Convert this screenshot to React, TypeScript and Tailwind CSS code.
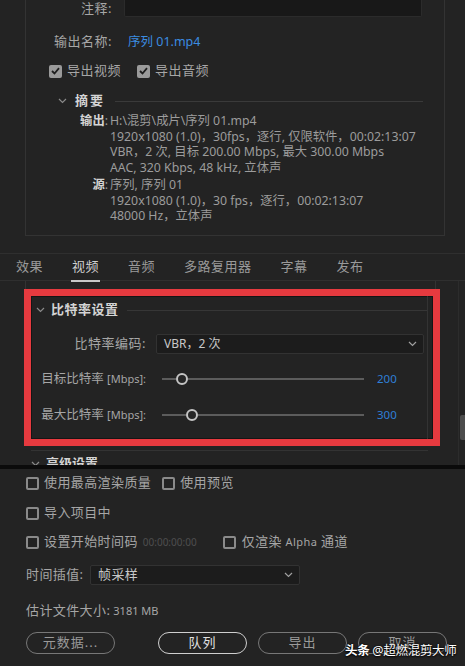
const Chevron = ({ className = '' }: { className?: string }) => (
  <svg width="9" height="6" viewBox="0 0 9 6" className={className}>
    <polyline points="1,1 4.5,4.5 8,1" fill="none" stroke="currentColor" strokeWidth="1.2" />
  </svg>
);

const CheckedBox = () => (
  <span className="flex h-[13px] w-[13px] shrink-0 items-center justify-center rounded-[2px] bg-[#9a9a9a]">
    <svg width="9" height="8" viewBox="0 0 9 8">
      <polyline points="1,4 3.5,6.5 8,1.2" fill="none" stroke="#1e1e1e" strokeWidth="1.8" />
    </svg>
  </span>
);

const EmptyBox = () => <span className="block h-[13px] w-[13px] shrink-0 rounded-[2px] border-2 border-[#8a8a8a]" />;

function Slider({ offset, value }: { offset: number; value: string }) {
  return (
    <div className="flex h-[20px] items-center">
      <span className="w-[115px] text-right text-[12.5px] text-[#a6a6a6]">
        {value === '200' ? '目标比特率' : '最大比特率'} <span className="text-[11px]">[Mbps]:</span>
      </span>
      <div className="ml-[16px] flex w-[202px] items-center">
        <div className="h-[2px] bg-[#5c5c5c]" style={{ width: offset - 6 }} />
        <span className="h-[12px] w-[12px] shrink-0 rounded-full border-[2.5px] border-[#c4c4c4] bg-[#262626]" />
        <div className="h-[2px] flex-1 bg-[#5c5c5c]" />
      </div>
      <span className="ml-[13px] text-[11.5px] text-[#2f7fd6]">{value}</span>
    </div>
  );
}

export default function App() {
  return (
    <div className="relative flex h-[666px] w-[465px] flex-col overflow-hidden bg-[#232323] font-['Noto_Sans','Noto_Sans_CJK_SC',sans-serif] text-[#a6a6a6]">
      {/* top summary panel */}
      <div className="h-[253px] shrink-0 pl-[25px] pr-[20px]">
        <div className="flex h-[236px] flex-col border-x border-b border-[#333333]">
          <div className="flex h-[17px] items-center">
            <span className="w-[86px] text-right text-[13px] tracking-[0.5px]">注释:</span>
            <div className="ml-[12px] h-[17px] w-[298px] rounded-b-[2px] border-x border-b border-[#2b2b2b] bg-[#181818]" />
          </div>
          <div className="mt-[16px] flex h-[18px] items-center">
            <span className="w-[86px] text-right text-[13px] tracking-[0.5px]">输出名称:</span>
            <span className="ml-[16px] text-[12.5px] text-[#3b8ce0]">序列 01.mp4</span>
          </div>
          <div className="mt-[12px] flex h-[16px] items-center pl-[23px] text-[13px] tracking-[0.5px]">
            <CheckedBox />
            <span className="ml-[5px]">导出视频</span>
            <span className="ml-[16px] flex"><CheckedBox /></span>
            <span className="ml-[5px]">导出音频</span>
          </div>
          <div className="mt-[14px] flex h-[16px] items-center pl-[32px] pr-[21px]">
            <Chevron className="text-[#8a8a8a]" />
            <span className="ml-[8px] text-[13px] font-bold tracking-[2px] text-[#d4d4d4]">摘要</span>
            <div className="ml-[10px] h-px flex-1 bg-[#3a3a3a]" />
          </div>
          <div className="mt-[4px] flex text-[12.3px] leading-[15.5px] text-[#9c9c9c]">
            <span className="w-[82px] text-right"><b className="text-[#d4d4d4]">输出</b>:</span>
            <div className="ml-[2px] flex flex-col whitespace-nowrap">
              <span>H:\混剪\成片\序列 01.mp4</span>
              <span>1920x1080 (1.0)，30fps，逐行, 仅限软件，00:02:13:07</span>
              <span>VBR，2 次, 目标 200.00 Mbps, 最大 300.00 Mbps</span>
              <span>AAC, 320 Kbps, 48 kHz, 立体声</span>
            </div>
          </div>
          <div className="mt-[2px] flex text-[12.3px] leading-[15.5px] text-[#9c9c9c]">
            <span className="w-[82px] text-right"><b className="text-[#d4d4d4]">源</b>:</span>
            <div className="ml-[2px] flex flex-col whitespace-nowrap">
              <span>序列, 序列 01</span>
              <span>1920x1080 (1.0)，30 fps，逐行，00:02:13:07</span>
              <span>48000 Hz，立体声</span>
            </div>
          </div>
        </div>
      </div>

      {/* tabs */}
      <div className="flex h-[28px] shrink-0 items-center gap-[29px] border-y border-[#2f2f2f] pl-[16px] text-[13px] tracking-[0.5px] text-[#9a9a9a]">
        <span>效果</span>
        <span className="relative text-[#d0d0d0]">
          视频
          <span className="absolute -bottom-[5px] left-[-1px] h-[2px] w-[29px] bg-[#c8c8c8]" />
        </span>
        <span>音频</span>
        <span>多路复用器</span>
        <span>字幕</span>
        <span>发布</span>
      </div>

      {/* video settings */}
      <div className="mr-[6px] flex h-[184px] shrink-0 flex-col border-r border-[#2c2c2c] pl-[24px] pr-[18px]">
        <div className="ml-[1px] h-[8px] w-[411px] border-x border-[#333333]" />
        <div className="flex h-[157px] flex-col border-[7px] border-[#e63a3f] shadow-[inset_0_0_0_1px_#151515]">
          <div className="mr-[5px] flex flex-1 flex-col border-r border-[#333333] pl-[5px]">
            <div className="mt-[6px] flex h-[16px] items-center">
              <Chevron className="text-[#8a8a8a]" />
              <span className="ml-[6px] text-[13px] font-bold tracking-[0.5px] text-[#d4d4d4]">比特率设置</span>
              <div className="ml-[8px] h-px flex-1 bg-[#363636]" />
            </div>
            <div className="mt-[16px] flex h-[20px] items-center">
              <span className="w-[110px] text-right text-[13px] tracking-[0.5px]">比特率编码:</span>
              <div className="ml-[10px] flex h-[20px] w-[268px] items-center justify-between rounded-[2px] border border-[#323232] bg-[#1c1c1c] pl-[7px] pr-[6px]">
                <span className="text-[12px] text-[#c8c8c8]">VBR，2 次</span>
                <Chevron className="text-[#a0a0a0]" />
              </div>
            </div>
            <div className="mt-[15px] -ml-[5px]"><Slider offset={20} value="200" /></div>
            <div className="mt-[16px] -ml-[5px]"><Slider offset={30} value="300" /></div>
          </div>
        </div>
        <div className="h-[19px] overflow-hidden pl-[7px] pr-[12px]">
          <div className="mt-[4px] h-px bg-[#333333]" />
          <div className="mt-[3px] flex items-center">
            <Chevron className="text-[#8a8a8a]" />
            <span className="ml-[6px] text-[13px] font-bold text-[#d4d4d4]">高级设置</span>
          </div>
        </div>
      </div>

      <div className="h-[4px] shrink-0 bg-[#0b0b0b]" />

      {/* render options */}
      <div className="flex flex-1 flex-col pl-[26px] text-[13px] tracking-[0.4px]">
        <div className="mt-[7px] flex h-[14px] items-center">
          <EmptyBox />
          <span className="ml-[5px]">使用最高渲染质量</span>
          <span className="ml-[11px]"><EmptyBox /></span>
          <span className="ml-[5px]">使用预览</span>
        </div>
        <div className="mt-[16px] flex h-[14px] items-center">
          <EmptyBox />
          <span className="ml-[5px]">导入项目中</span>
        </div>
        <div className="mt-[15px] flex h-[14px] items-center">
          <EmptyBox />
          <span className="ml-[5px]">设置开始时间码</span>
          <span className="ml-[5px] text-[10px] tracking-normal text-[#4e4e4e]">00:00:00:00</span>
          <span className="ml-[26px]"><EmptyBox /></span>
          <span className="ml-[6px]">仅渲染 <span className="text-[11px]">Alpha</span> 通道</span>
        </div>
        <div className="mt-[16px] flex h-[20px] items-center">
          <span className="w-[64px]">时间插值:</span>
          <div className="flex h-[20px] w-[210px] items-center justify-between rounded-[2px] border border-[#323232] bg-[#1c1c1c] pl-[7px] pr-[6px]">
            <span className="text-[13px] text-[#c8c8c8]">帧采样</span>
            <Chevron className="text-[#a0a0a0]" />
          </div>
        </div>
        <div className="mt-[16px] flex h-[20px] items-center">
          <span>估计文件大小:</span>
          <span className="ml-[3px] text-[11px] tracking-normal">3181 MB</span>
        </div>
        <div className="mt-[11px] flex h-[22px] items-center gap-[11px] tracking-[1px]">
          <button className="mr-[32px] h-[22px] w-[89px] rounded-full border-[1.5px] border-[#777777] text-[#9a9a9a]">元数据...</button>
          <button className="h-[22px] w-[89px] rounded-full border-[1.5px] border-[#cfcfcf] text-[#e0e0e0]">队列</button>
          <button className="h-[22px] w-[89px] rounded-full border-[1.5px] border-[#777777] text-[#9a9a9a]">导出</button>
          <button className="h-[22px] w-[89px] rounded-full border-[1.5px] border-[#777777] text-[#9a9a9a]">取消</button>
        </div>
      </div>

      {/* scrollbar thumb */}
      <div className="absolute left-[460px] top-[415px] h-[25px] w-[5px] rounded-l-[2px] bg-[#4c4c4c]" />

      {/* watermark */}
      <div className="absolute left-[345px] top-[642px] whitespace-nowrap text-[12.5px] tracking-[-0.3px] text-white [text-shadow:0_0_2px_#000,0_1px_2px_#000]">
        <b>头条</b> @超燃混剪大师
      </div>
    </div>
  );
}
